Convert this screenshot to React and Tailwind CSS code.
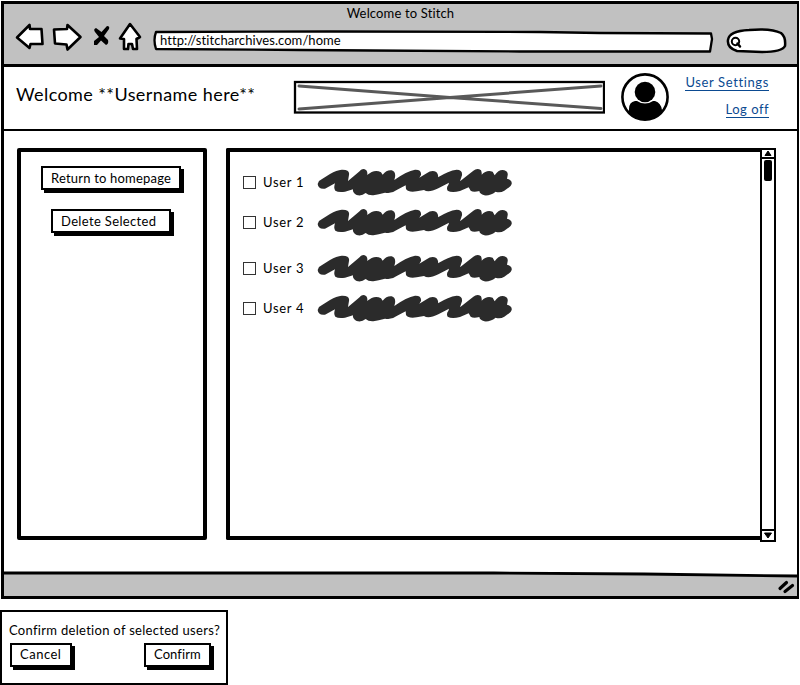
import React from "react";

function Scribble() {
  return (
    <svg width="196" height="28" viewBox="273 84 588 84" fill="#2b2b2b">
      <path d="M278 132Q280 122 290 118L315 102Q335 90 350 89Q375 88 372 105L369 123L402 95Q412 82 424 91Q429 98 426 105L440 96Q455 89 468 97L473 104Q485 89 500 91Q513 95 510 112L508 120Q545 93 570 89Q590 88 588 105L583 113L605 100Q620 89 634 96Q641 103 639 112Q670 92 695 89Q713 89 711 106L705 124L745 92Q757 82 768 91Q771 98 770 104Q785 88 803 95L809 106Q822 87 838 91Q850 95 848 106L846 116Q862 120 860 132Q858 140 848 145L838 152Q825 160 812 155Q795 168 778 166Q764 162 763 153Q745 158 737 152L731 142L705 153Q680 160 668 152Q663 143 670 135L672 128L640 145Q610 160 597 150L575 154Q550 158 543 147L542 136L515 150Q500 162 480 158Q460 163 445 166Q430 167 422 159Q410 169 395 165Q382 158 384 148L360 155Q340 158 331 152Q325 145 330 130L300 146Q280 149 278 132Z" />
    </svg>
  );
}

function Label({ children, className = "" }) {
  return <span className={"block whitespace-nowrap " + className}>{children}</span>;
}

function SketchButton({ children, className = "" }) {
  return (
    <button className={"flex h-[24px] items-center border-2 border-black bg-white pl-2 text-[13px] leading-4 shadow-[3px_3px_0_0_#000] " + className}>
      {children}
    </button>
  );
}

function UserRow({ name, className = "" }) {
  return (
    <div className={"flex h-[28px] items-center " + className}>
      <span className="mt-px block size-[13px] border border-[#333] bg-white" />
      <Label className="ml-[7px] w-[53px] pt-[2px] text-[13px] tracking-[0.7px]">{name}</Label>
      <Scribble />
    </div>
  );
}

function Toolbar() {
  return (
    <header className="h-[63px] border-b-[3px] border-black bg-[#c1c1c1]">
      <Label className="h-[15px] text-center text-[13px] leading-[18px] tracking-[0.15px]">Welcome to Stitch</Label>
      <div className="flex h-[40px] items-start">
        <svg className="ml-[9px] shrink-0" width="136" height="36" viewBox="13 19 136 36" fill="white" stroke="black" strokeWidth="2.6" strokeLinejoin="round" strokeLinecap="round">
          <path d="M17 37.5L29.500 25L30 29L41.500 29L42.500 44L30.500 44L29.500 48Z" />
          <path d="M54 29.500L67 29L67.500 25L80.500 37L67.500 49.500L66.500 44.500L55 43.500Z" />
          <path d="M96 28Q93 29 95 32L99 37L94 41L94 45L97 45L101 40.500L106 45Q109 44 108 40L104 36L109 29Q110 26 107 26L101.500 32Z" fill="black" stroke="none" />
          <path d="M130 24L140 37L136.500 39L137 49L133 49L132 44L128.500 44L128 49L124 49L124 39L120 38.500Z" />
        </svg>
        <div className="relative ml-1 flex h-[36px] w-[562px] shrink-0 items-start">
          <svg className="absolute inset-0" width="562" height="36" viewBox="153 19 562 36" fill="white" stroke="black" strokeWidth="2.3" strokeLinejoin="round">
            <path d="M156 32L330 31.500L540 32L600 33L711 33.500L712 39L710 51.500L520 51.500L370 50.500L300 50L156 49Q153 40 156 32Z" />
          </svg>
          <span className="relative ml-[7px] mt-[12px] whitespace-nowrap text-[13px] leading-[18px] tracking-[0.07px]">http://stitcharchives.com/home</span>
        </div>
        <svg className="ml-[9px] shrink-0" width="64" height="36" viewBox="725 19 64 36" fill="white" stroke="black" strokeWidth="2.500" strokeLinecap="round">
          <path d="M729 40Q730 31 750 30Q772 28 782 33Q787 37 786 46Q783 52 763 52L738 51Q728 48 729 40Z" />
          <circle cx="736.500" cy="41.500" r="3.700" strokeWidth="2" />
          <path d="M738.500 43.500L741 46.500" strokeWidth="2.500" />
        </svg>
      </div>
    </header>
  );
}

function Banner() {
  return (
    <section className="flex h-[64px] items-start border-b-2 border-black">
      <Label className="ml-[12px] mt-[15px] w-[277px] text-[18px] leading-6 tracking-[0.42px]">Welcome **Username here**</Label>
      <svg className="mt-[13px] shrink-0" width="312" height="34" viewBox="293 80 312 34" fill="none">
        <rect x="295" y="82" width="309" height="30.500" stroke="black" strokeWidth="2.300" />
        <path d="M299 86L450 97.500L601 108.500M299 109L450 97.500L601 86" stroke="#595959" strokeWidth="3" strokeLinecap="round" />
      </svg>
      <svg className="ml-[15px] mt-[5px] shrink-0" width="50" height="50" viewBox="620 72 50 50">
        <circle cx="645" cy="97" r="22.600" fill="white" stroke="black" strokeWidth="2.600" />
        <circle cx="645" cy="92" r="10.300" />
        <path d="M629 112V109Q629 102 635 101L637 101Q645 106 653 101L655 101Q661 103 662 110V112Q655 120 645 120Q634 120 629 112Z" />
      </svg>
      <nav className="ml-[15px] flex w-[84px] flex-col items-end text-[13px] leading-[15px] text-[#0b4a91]">
        <a className="mt-[8px] border-b border-[#0b4a91] whitespace-nowrap tracking-[0.62px]">User Settings</a>
        <a className="mt-[11px] border-b border-[#0b4a91] whitespace-nowrap tracking-[0.5px]">Log off</a>
      </nav>
    </section>
  );
}

function Scrollbar() {
  return (
    <div className="flex h-[394px] w-[16px] flex-col justify-between border-2 border-black bg-white">
      <div className="flex flex-col items-center">
        <svg width="12" height="7" viewBox="0 1 12 7"><path d="M6 2L9 6.500H3Z" stroke="black" strokeLinejoin="round" /></svg>
        <div className="h-[2px] w-full bg-black" />
        <div className="mt-px h-[21px] w-[8px] rounded-[2px] bg-black" />
      </div>
      <div className="border-t-2 border-black">
        <svg width="12" height="9" viewBox="0 0 12 9"><path d="M2.500 2H9.500L6 7Z" stroke="black" strokeLinejoin="round" /></svg>
      </div>
    </div>
  );
}

export default function App() {
  return (
    <main className="h-[685px] w-[800px] overflow-hidden bg-white font-['Lato',sans-serif] text-black">
      <div className="ml-px flex h-[599px] w-[798px] flex-col pt-px">
        <div className="flex h-[598px] flex-col border-[3px] border-r-2 border-black">
          <Toolbar />
          <Banner />
          <div className="flex h-[440px] items-start pl-[13px] pt-[17px]">
            <aside className="flex h-[392px] w-[190px] flex-col items-start rounded-[2px] border-4 border-black">
              <SketchButton className="ml-[20px] mt-[14px] w-[140px] tracking-[0.2px]">Return to homepage</SketchButton>
              <SketchButton className="ml-[30px] mt-[19px] w-[120px] tracking-[0.35px]">Delete Selected</SketchButton>
            </aside>
            <section className="ml-[19px] h-[392px] w-[534px] rounded-l-[2px] border-4 border-r-0 border-black pl-[13px] pt-[16px]">
              <UserRow name="User 1" />
              <UserRow name="User 2" className="mt-[12px]" />
              <UserRow name="User 3" className="mt-[18px]" />
              <UserRow name="User 4" className="mt-[12px]" />
            </section>
            <Scrollbar />
          </div>
          <footer className="relative flex flex-1 items-end justify-end bg-[#c1c1c1]">
            <svg className="absolute left-0 top-0" width="793" height="7" viewBox="0 0 793 7">
              <path d="M0 0H793V5L650 3L500 2H0Z" fill="white" />
              <path d="M0 2H490L640 3L793 5" fill="none" stroke="black" strokeWidth="2.800" />
            </svg>
            <svg width="20" height="18" viewBox="776 578 20 18" fill="none" stroke="black" strokeLinecap="round" strokeWidth="3.200">
              <path d="M779 588.500L785.500 582.500M784 591.500L791.500 585.500" />
            </svg>
          </footer>
        </div>
      </div>
      <section className="mt-[11px] h-[75px] w-[228px] border-[2.500px] border-black px-[7px] pt-[9px]">
        <Label className="text-[13px] leading-[18px] tracking-[0.3px]">Confirm deletion of selected users?</Label>
        <div className="mt-[4px] flex items-start">
          <SketchButton className="ml-px w-[62px] pb-[2px] tracking-[0.5px]">Cancel</SketchButton>
          <SketchButton className="ml-[72px] w-[67px] pb-[2px] tracking-[0.1px]">Confirm</SketchButton>
        </div>
      </section>
    </main>
  );
}
